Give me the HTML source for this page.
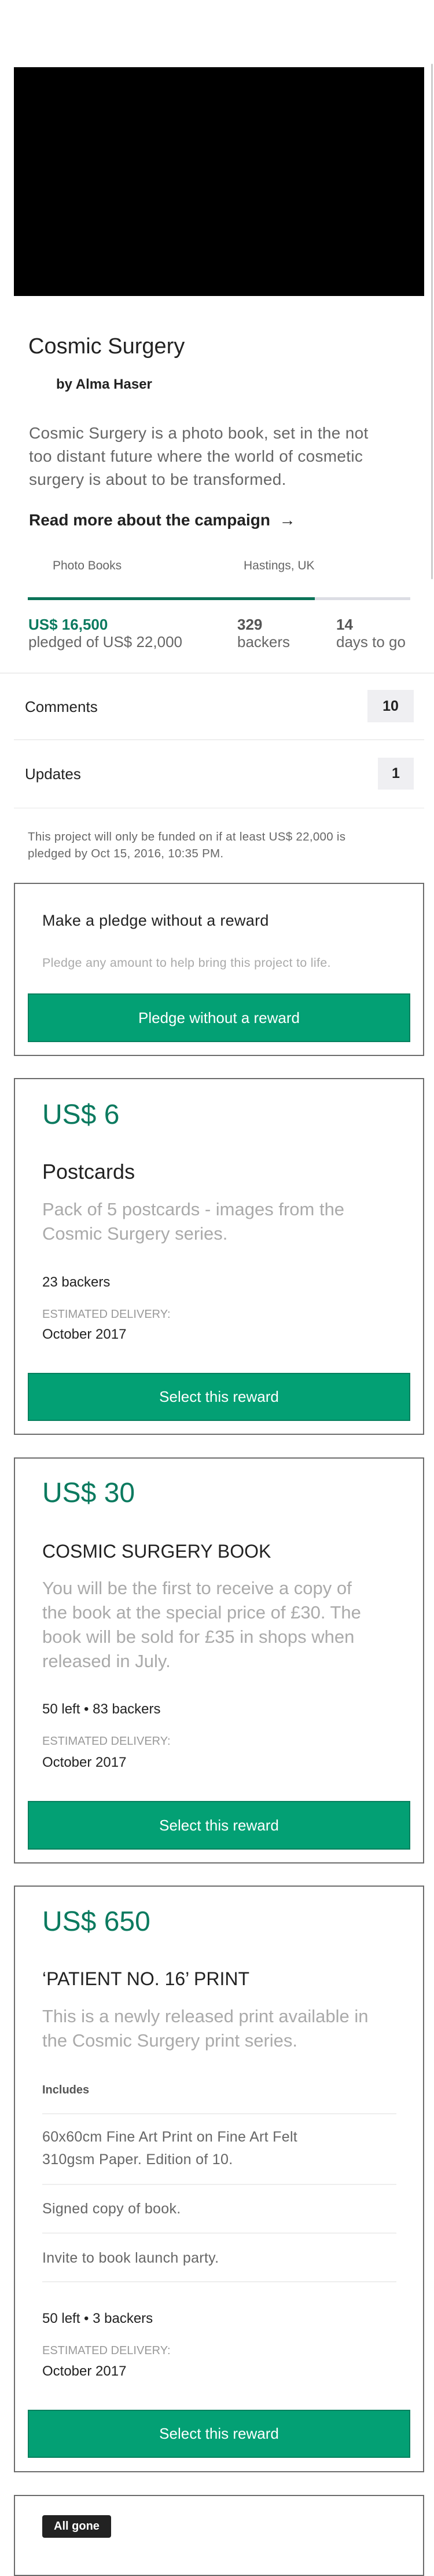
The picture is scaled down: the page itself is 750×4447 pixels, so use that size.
<!DOCTYPE html>
<html><head><meta charset="utf-8"><style>
*{margin:0;padding:0;box-sizing:border-box}
body{width:750px;height:4400px;position:relative;background:#fff;font-family:"Liberation Sans",Arial,sans-serif;color:#222;overflow:hidden}
.a{position:absolute;white-space:nowrap}
.card{position:absolute;left:24px;width:709px;border:2px solid #6b6b6b;background:#fff}
.btn{position:absolute;left:48px;width:661px;background:#03a074;border:2px solid #05805e;color:#fff;font-size:26px;text-align:center}
.hr{position:absolute;height:2px;background:#eee}
.price{color:#0b7a5f}
.gray{color:#aaa}
</style></head><body>
<div class="a" style="left:745px;top:110px;width:3px;height:890px;background:#ccc;border-radius:2px"></div>
<div class="a" style="left:24px;top:116px;width:709px;height:395px;background:#000"></div>
<div class="a" style="left:49px;top:576px;font-size:38px;line-height:44px">Cosmic Surgery</div>
<div class="a" style="left:97px;top:650px;font-size:24px;font-weight:bold;line-height:28px">by Alma Haser</div>
<div class="a" style="left:50px;top:728px;font-size:28px;line-height:40px;color:#666;letter-spacing:0.3px">Cosmic Surgery is a photo book, set in the not<br>too distant future where the world of cosmetic<br>surgery is about to be transformed.</div>
<div class="a" style="left:50px;top:882px;font-size:28px;font-weight:bold;line-height:32px">Read more about the campaign &nbsp;→</div>
<div class="a" style="left:91px;top:964px;font-size:21px;color:#666;line-height:26px">Photo Books</div>
<div class="a" style="left:421px;top:964px;font-size:21px;color:#666;line-height:26px">Hastings, UK</div>
<div class="a" style="left:48px;top:1031px;width:661px;height:5px;background:#dcdde4"></div>
<div class="a" style="left:48px;top:1031px;width:496px;height:5px;background:#0b7358"></div>
<div class="a price" style="left:49px;top:1064px;font-size:26px;font-weight:bold;line-height:28px">US$ 16,500</div>
<div class="a" style="left:49px;top:1094px;font-size:26px;color:#666;line-height:28px">pledged of US$ 22,000</div>
<div class="a" style="left:410px;top:1064px;font-size:26px;font-weight:bold;color:#555;line-height:28px">329</div>
<div class="a" style="left:410px;top:1094px;font-size:26px;color:#666;line-height:28px">backers</div>
<div class="a" style="left:581px;top:1064px;font-size:26px;font-weight:bold;color:#555;line-height:28px">14</div>
<div class="a" style="left:581px;top:1094px;font-size:26px;color:#666;line-height:28px">days to go</div>
<div class="hr" style="left:0;top:1161px;width:750px"></div>
<div class="a" style="left:43px;top:1205px;font-size:26px;line-height:30px">Comments</div>
<div class="a" style="left:635px;top:1191px;width:80px;height:56px;background:#efeff2;font-size:25px;font-weight:bold;text-align:center;line-height:56px">10</div>
<div class="hr" style="left:24px;top:1276px;width:709px"></div>
<div class="a" style="left:43px;top:1321px;font-size:26px;line-height:30px">Updates</div>
<div class="a" style="left:653px;top:1308px;width:62px;height:55px;background:#efeff2;font-size:25px;font-weight:bold;text-align:center;line-height:55px">1</div>
<div class="hr" style="left:24px;top:1394px;width:709px;background:#f3f3f3"></div>
<div class="a" style="left:48px;top:1430px;font-size:20.5px;color:#666;line-height:29px;letter-spacing:0.3px">This project will only be funded on if at least US$ 22,000 is<br>pledged by Oct 15, 2016, 10:35 PM.</div>

<div class="card" style="top:1524px;height:299px"></div>
<div class="a" style="left:73px;top:1572px;font-size:27px;line-height:34px;letter-spacing:0.3px">Make a pledge without a reward</div>
<div class="a gray" style="left:73px;top:1649px;font-size:21.5px;line-height:26px;letter-spacing:0.3px">Pledge any amount to help bring this project to life.</div>
<div class="btn" style="top:1715px;height:84px;line-height:80px">Pledge without a reward</div>

<div class="card" style="top:1861px;height:616px"></div>
<div class="a price" style="left:73px;top:1897px;font-size:48px;line-height:56px">US$ 6</div>
<div class="a" style="left:73px;top:2002px;font-size:36px;line-height:42px">Postcards</div>
<div class="a gray" style="left:73px;top:2067px;font-size:31px;line-height:42px">Pack of 5 postcards - images from the<br>Cosmic Surgery series.</div>
<div class="a" style="left:73px;top:2200px;font-size:24px;line-height:28px">23 backers</div>
<div class="a" style="left:73px;top:2257px;font-size:20px;color:#999;line-height:24px">ESTIMATED DELIVERY:</div>
<div class="a" style="left:73px;top:2290px;font-size:24px;line-height:28px">October 2017</div>
<div class="btn" style="top:2370px;height:83px;line-height:79px">Select this reward</div>

<div class="card" style="top:2516px;height:701px"></div>
<div class="a price" style="left:73px;top:2550px;font-size:48px;line-height:56px">US$ 30</div>
<div class="a" style="left:73px;top:2659px;font-size:32px;line-height:38px">COSMIC SURGERY BOOK</div>
<div class="a gray" style="left:73px;top:2721px;font-size:31px;line-height:42px">You will be the first to receive a copy of<br>the book at the special price of £30. The<br>book will be sold for £35 in shops when<br>released in July.</div>
<div class="a" style="left:73px;top:2937px;font-size:24px;line-height:28px">50 left • 83 backers</div>
<div class="a" style="left:73px;top:2994px;font-size:20px;color:#999;line-height:24px">ESTIMATED DELIVERY:</div>
<div class="a" style="left:73px;top:3029px;font-size:24px;line-height:28px">October 2017</div>
<div class="btn" style="top:3109px;height:84px;line-height:80px">Select this reward</div>

<div class="card" style="top:3255px;height:1013px"></div>
<div class="a price" style="left:73px;top:3290px;font-size:48px;line-height:56px">US$ 650</div>
<div class="a" style="left:73px;top:3397px;font-size:32px;line-height:38px">‘PATIENT NO. 16’ PRINT</div>
<div class="a gray" style="left:73px;top:3460px;font-size:31px;line-height:42px">This is a newly released print available in<br>the Cosmic Surgery print series.</div>
<div class="a" style="left:73px;top:3596px;font-size:20px;font-weight:bold;color:#555;line-height:24px">Includes</div>
<div class="hr" style="left:73px;top:3648px;width:612px"></div>
<div class="a" style="left:73px;top:3670px;font-size:25px;color:#666;line-height:39px;letter-spacing:0.3px">60x60cm Fine Art Print on Fine Art Felt<br>310gsm Paper. Edition of 10.</div>
<div class="hr" style="left:73px;top:3770px;width:612px"></div>
<div class="a" style="left:73px;top:3798px;font-size:25px;color:#666;line-height:30px;letter-spacing:0.3px">Signed copy of book.</div>
<div class="hr" style="left:73px;top:3854px;width:612px"></div>
<div class="a" style="left:73px;top:3883px;font-size:25px;color:#666;line-height:30px;letter-spacing:0.3px">Invite to book launch party.</div>
<div class="hr" style="left:73px;top:3938px;width:612px"></div>
<div class="a" style="left:73px;top:3989px;font-size:24px;line-height:28px">50 left • 3 backers</div>
<div class="a" style="left:73px;top:4046px;font-size:20px;color:#999;line-height:24px">ESTIMATED DELIVERY:</div>
<div class="a" style="left:73px;top:4080px;font-size:24px;line-height:28px">October 2017</div>
<div class="btn" style="top:4160px;height:83px;line-height:79px">Select this reward</div>

<div class="card" style="top:4307px;height:140px"></div>
<div class="a" style="left:73px;top:4342px;width:119px;height:39px;background:#222;border-radius:4px;color:#fff;font-size:20px;font-weight:bold;text-align:center;line-height:39px">All gone</div>
</body></html>
